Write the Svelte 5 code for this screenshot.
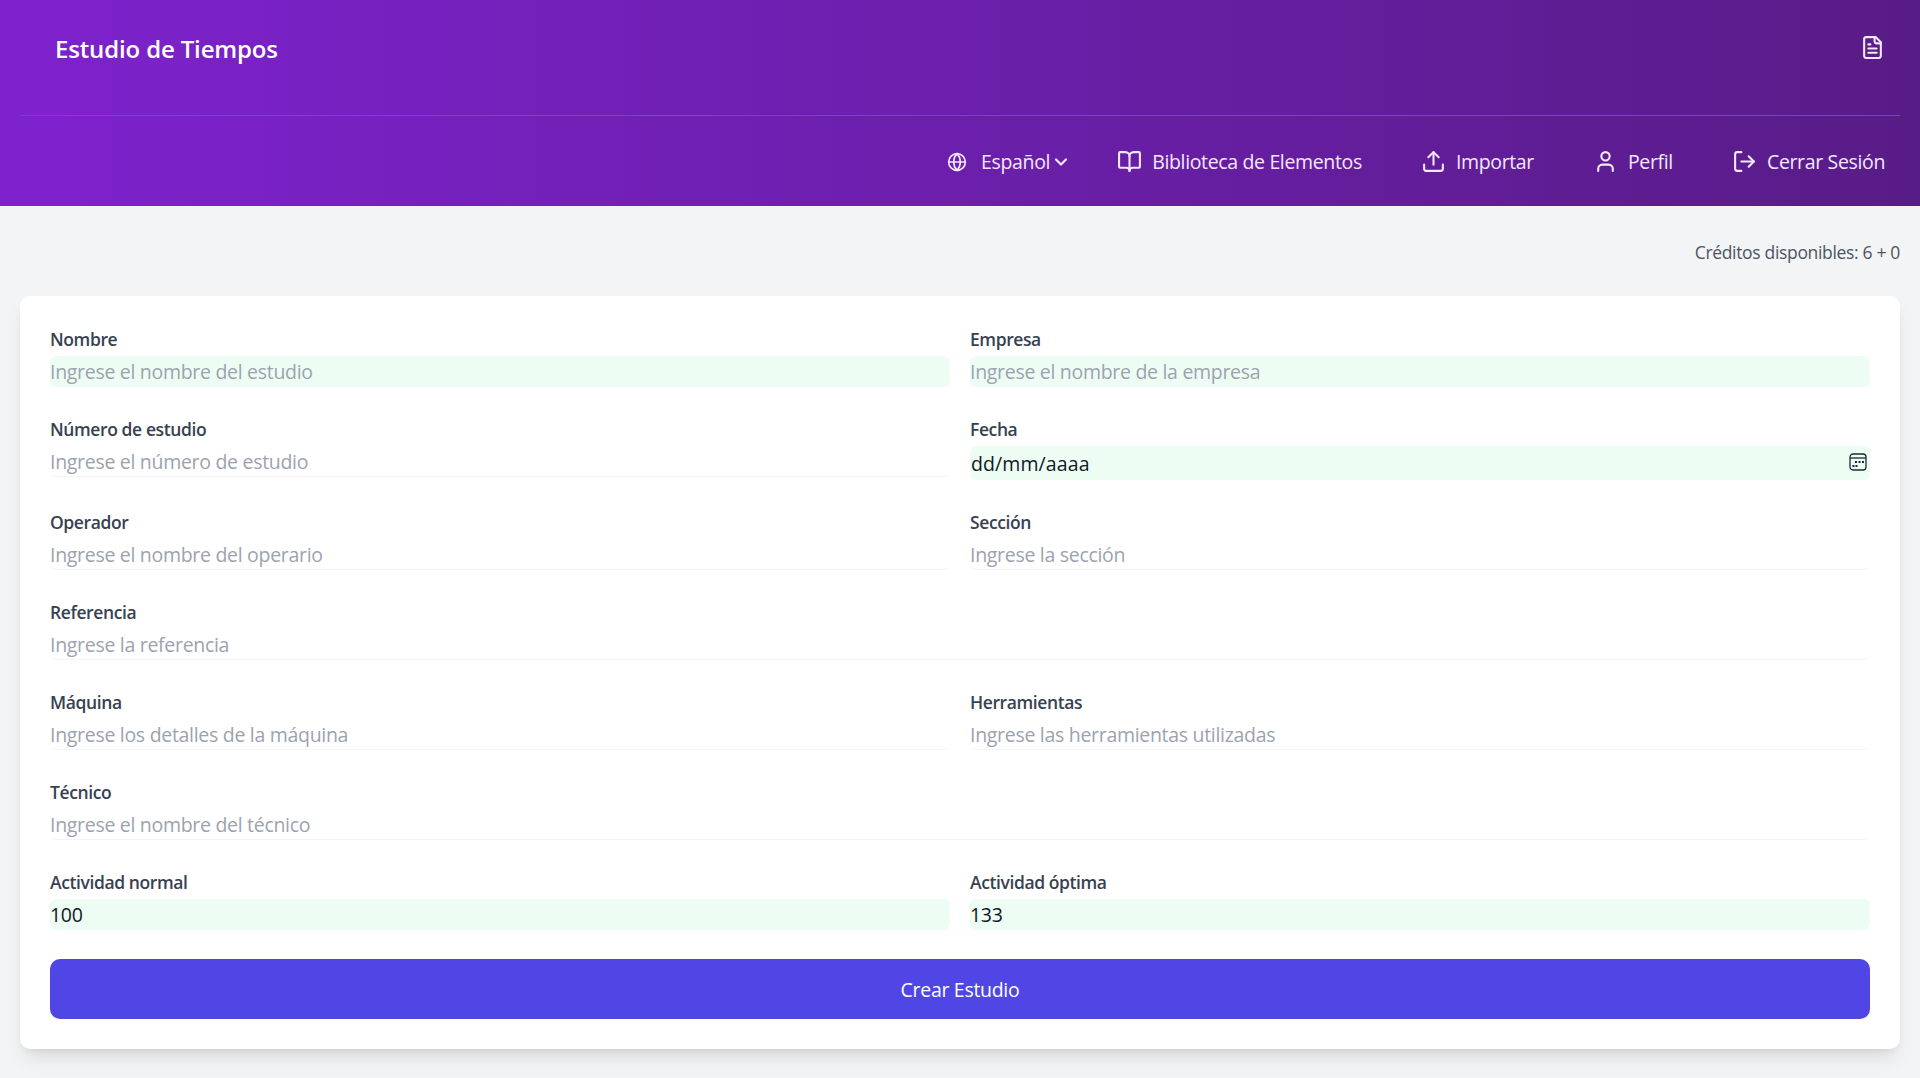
<script lang="ts">
	type Field = {
		label: string;
		placeholder?: string;
		value?: string;
		filled?: boolean;
		full?: boolean;
		date?: boolean;
	};

	const fields: Field[] = [
		{ label: 'Nombre', placeholder: 'Ingrese el nombre del estudio', filled: true },
		{ label: 'Empresa', placeholder: 'Ingrese el nombre de la empresa', filled: true },
		{ label: 'Número de estudio', placeholder: 'Ingrese el número de estudio' },
		{ label: 'Fecha', value: 'dd/mm/aaaa', filled: true, date: true },
		{ label: 'Operador', placeholder: 'Ingrese el nombre del operario' },
		{ label: 'Sección', placeholder: 'Ingrese la sección' },
		{ label: 'Referencia', placeholder: 'Ingrese la referencia', full: true },
		{ label: 'Máquina', placeholder: 'Ingrese los detalles de la máquina' },
		{ label: 'Herramientas', placeholder: 'Ingrese las herramientas utilizadas' },
		{ label: 'Técnico', placeholder: 'Ingrese el nombre del técnico', full: true },
		{ label: 'Actividad normal', value: '100', filled: true },
		{ label: 'Actividad óptima', value: '133', filled: true }
	];

	function handleSubmit(e: Event) {
		e.preventDefault();
	}
</script>

<header class="topbar">
	<div class="title-row">
		<h1 class="title">Estudio de Tiempos</h1>
		<button class="doc-btn" aria-label="Documento">
			<svg class="icon" viewBox="0 0 24 24">
				<path d="M15 2H6a2 2 0 0 0-2 2v16a2 2 0 0 0 2 2h12a2 2 0 0 0 2-2V7Z" />
				<path d="M14 2v4a2 2 0 0 0 2 2h4" />
				<path d="M10 9H8" />
				<path d="M16 13H8" />
				<path d="M16 17H8" />
			</svg>
		</button>
	</div>
	<nav class="nav">
		<button class="lang">
			<svg class="icon small" viewBox="0 0 24 24">
				<circle cx="12" cy="12" r="10" />
				<path d="M12 2a14.5 14.5 0 0 0 0 20 14.5 14.5 0 0 0 0-20" />
				<path d="M2 12h20" />
			</svg>
			<span class="lang-name">Español</span>
			<svg class="icon small chevron" viewBox="0 0 24 24"><path d="m6 9 6 6 6-6" /></svg>
		</button>
		<button class="nav-item">
			<svg class="icon" viewBox="0 0 24 24">
				<path d="M12 7v14" />
				<path
					d="M3 18a1 1 0 0 1-1-1V4a1 1 0 0 1 1-1h5a4 4 0 0 1 4 4 4 4 0 0 1 4-4h5a1 1 0 0 1 1 1v13a1 1 0 0 1-1 1h-6a3 3 0 0 0-3 3 3 3 0 0 0-3-3z"
				/>
			</svg>
			Biblioteca de Elementos
		</button>
		<button class="nav-item">
			<svg class="icon" viewBox="0 0 24 24">
				<path d="M21 15v4a2 2 0 0 1-2 2H5a2 2 0 0 1-2-2v-4" />
				<path d="m17 8-5-5-5 5" />
				<path d="M12 3v12" />
			</svg>
			Importar
		</button>
		<button class="nav-item">
			<svg class="icon" viewBox="0 0 24 24">
				<path d="M19 21v-2a4 4 0 0 0-4-4H9a4 4 0 0 0-4 4v2" />
				<circle cx="12" cy="7" r="4" />
			</svg>
			Perfil
		</button>
		<button class="nav-item">
			<svg class="icon" viewBox="0 0 24 24">
				<path d="M9 21H5a2 2 0 0 1-2-2V5a2 2 0 0 1 2-2h4" />
				<path d="m16 17 5-5-5-5" />
				<path d="M21 12H9" />
			</svg>
			Cerrar Sesión
		</button>
	</nav>
</header>

<main class="page">
	<p class="credits">Créditos disponibles: 6 + 0</p>
	<form class="card" onsubmit={handleSubmit}>
		<div class="grid">
			{#each fields as field}
				<div class="field" class:full={field.full}>
					<label class="label" for={field.label}>{field.label}</label>
					{#if field.date}
						<div class="date-wrap">
							<input id={field.label} class="input filled date" type="text" value={field.value} />
							<svg class="calendar" viewBox="0 0 18 18" aria-hidden="true">
								<rect x="1" y="1" width="16" height="16" rx="3" />
								<path d="M1 5h16" />
								<g class="dots">
									<rect x="6" y="8" width="2" height="2" />
									<rect x="9.5" y="8" width="2" height="2" />
									<rect x="13" y="8" width="2" height="2" />
									<rect x="3.5" y="12" width="2" height="2" />
									<rect x="6.5" y="12" width="2" height="2" />
								</g>
							</svg>
						</div>
					{:else}
						<input
							id={field.label}
							class="input"
							class:filled={field.filled}
							type="text"
							placeholder={field.placeholder}
							value={field.value ?? ''}
						/>
					{/if}
				</div>
			{/each}
		</div>
		<button type="submit" class="submit">Crear Estudio</button>
	</form>
</main>

<style>
	:global(body) {
		background: #f3f4f6;
		font-family: 'Open Sans', 'Noto Sans', sans-serif;
	}

	button {
		background: none;
		border: 0;
		padding: 0;
		color: inherit;
		font: inherit;
		letter-spacing: inherit;
		cursor: pointer;
	}

	.topbar {
		height: 206px;
		background: linear-gradient(to right, #7e22ce, #581c87);
		color: #f3e8ff;
		padding: 0 20px;
		box-sizing: border-box;
	}

	.title-row {
		display: flex;
		justify-content: space-between;
		align-items: flex-start;
		height: 84px;
		padding: 31px 15px 0 35px;
		border-bottom: 1px solid #7c3aed;
	}

	.title {
		margin: 0;
		font-size: 24px;
		font-weight: 600;
		line-height: 35px;
		color: #fff;
		letter-spacing: -0.15px;
	}

	.doc-btn {
		display: flex;
		margin-top: 4px;
	}

	.icon {
		width: 25px;
		height: 25px;
		fill: none;
		stroke: currentColor;
		stroke-width: 2;
		stroke-linecap: round;
		stroke-linejoin: round;
		flex: none;
	}

	.icon.small {
		width: 20px;
		height: 20px;
	}

	.icon.chevron {
		stroke-width: 2.6;
		margin-left: 1px;
	}

	.nav {
		display: flex;
		justify-content: flex-end;
		align-items: center;
		gap: 59px;
		height: 90px;
		padding: 1px 15px 0 0;
		box-sizing: border-box;
		font-size: 19.5px;
		letter-spacing: -0.35px;
	}

	.nav-item {
		display: flex;
		align-items: center;
		gap: 10px;
	}

	.lang {
		display: flex;
		align-items: center;
		margin-right: -13px;
	}

	.lang-name {
		margin-left: 14px;
	}

	.page {
		padding: 34px 20px 29px;
	}

	.credits {
		margin: 0 0 31px;
		text-align: right;
		font-size: 17.5px;
		line-height: 25px;
		color: #4b5563;
		letter-spacing: -0.33px;
	}

	.card {
		background: #fff;
		border-radius: 10px;
		padding: 30px;
		box-shadow:
			0 12px 19px -4px rgba(0, 0, 0, 0.1),
			0 5px 8px -5px rgba(0, 0, 0, 0.1);
	}

	.grid {
		display: grid;
		grid-template-columns: 1fr 1fr;
		column-gap: 20px;
		row-gap: 29px;
	}

	.field.full {
		grid-column: span 2;
	}

	.label {
		display: block;
		margin-bottom: 4px;
		font-size: 17.5px;
		font-weight: 550;
		line-height: 26px;
		color: #374151;
		letter-spacing: -0.4px;
	}

	.input {
		display: block;
		box-sizing: border-box;
		width: 100%;
		height: 31px;
		padding: 1px 0 0;
		border: 0;
		border-bottom: 1px solid #f3f4f6;
		border-radius: 6px;
		background: #fff;
		outline: none;
		font-family: inherit;
		font-size: 19.5px;
		color: #111827;
		letter-spacing: -0.3px;
	}

	.input::placeholder {
		color: #9ca3af;
		opacity: 1;
	}

	.input.filled {
		background: #edfdf3;
		border-bottom-color: transparent;
	}

	.date-wrap {
		position: relative;
	}

	.input.date {
		height: 34px;
		padding-left: 1px;
		letter-spacing: 0.1px;
	}

	.calendar {
		position: absolute;
		top: 7px;
		right: 3px;
		width: 18px;
		height: 18px;
		fill: none;
		stroke: #1f2937;
		stroke-width: 1.3;
	}

	.dots rect {
		fill: #1f2937;
		stroke: none;
	}

	.submit {
		display: block;
		width: 100%;
		height: 60px;
		margin-top: 29px;
		border-radius: 10px;
		background: #4f46e5;
		color: #fff;
		font-size: 19.5px;
		font-weight: 500;
		letter-spacing: -0.3px;
	}
</style>
